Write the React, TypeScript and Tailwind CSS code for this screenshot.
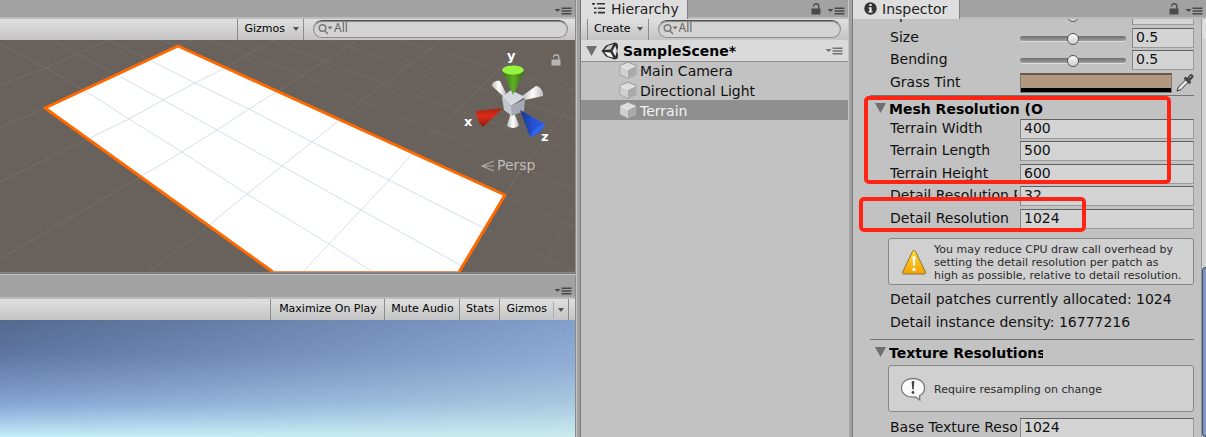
import React from "react";

const font = "font-['DejaVu_Sans','Noto_Sans',sans-serif]";
const toolbar = "flex h-[21px] shrink-0 items-stretch bg-linear-to-b from-[#e0e0e0] to-[#c4c4c4]";
const toolButton = "flex items-center border-l border-[#8c8c8c] text-[11px] text-black";

function MenuIcon({ light = false }: { light?: boolean }) {
  return (
    <svg viewBox="0 0 18 10" className="h-2.5 w-[18px]" fill={light ? "#707070" : "#484848"}>
      <path d="M0.5 3h6L3.5 6z" />
      <path d="M7.5 1.5h10v1.4h-10zM7.5 4.3h10v1.4h-10zM7.5 7.1h10v1.4h-10z" />
    </svg>
  );
}

function LockIcon({ color = "#4a4a4a" }: { color?: string }) {
  return (
    <svg viewBox="0 0 10 12" className="h-3 w-2.5" fill="none">
      <path d="M2.5 3.5V3a2.6 2.2 0 0 1 5.3 0v3" stroke={color} strokeWidth="1.3" />
      <path d="M0.5 5.5h9v6h-9z" fill={color} />
    </svg>
  );
}

function Caret({ className = "" }: { className?: string }) {
  return (
    <svg viewBox="0 0 6 4" className={`h-1 w-1.5 ${className}`}>
      <path d="M0 0h6L3 4z" fill="#555" />
    </svg>
  );
}

function Foldout() {
  return (
    <svg viewBox="0 0 11 10" className="h-2.5 w-[11px] shrink-0">
      <path d="M0 0h11L5.5 10z" fill="#6e6e6e" />
    </svg>
  );
}

function TabBar({ children, lock = false, tall = false }: { children?: React.ReactNode; lock?: boolean; tall?: boolean }) {
  return (
    <div className={`flex shrink-0 items-stretch border-b-2 border-[#bcbcbc] bg-[#a2a2a2] ${tall ? "h-6" : "h-[19px]"}`}>
      {children}
      <div className="ml-auto flex items-end gap-1.5 pr-[3px]">
        {lock && (
          <button aria-label="Lock" className="pb-0.5">
            <LockIcon />
          </button>
        )}
        <button aria-label="Panel menu" className="pb-px">
          <MenuIcon />
        </button>
      </div>
    </div>
  );
}

function Tab({ icon, label }: { icon: React.ReactNode; label: string }) {
  return (
    <button className="-mb-0.5 flex min-w-[107px] items-center gap-[5px] border-r border-[#808080] bg-[#dedede] pr-2 pb-0.5 pl-[11px] text-sm leading-4 text-[#222]">
      {icon}
      {label}
    </button>
  );
}

function Search({ label }: { label: string }) {
  return (
    <label className="my-px flex h-[18px] flex-1 items-center rounded-full border border-[#8e8e8e] border-t-[#4c4c4c] bg-[#d4d4d4] pl-1 shadow-[inset_0_1px_1px_#8a8a8a]">
      <svg viewBox="0 0 16 12" className="h-3 w-4 shrink-0" fill="none" stroke="#7c7c7c" strokeWidth="1.6">
        <circle cx="4.5" cy="5" r="3.3" />
        <path d="M7 8l3 3" />
        <path d="M9.5 3.5h5L12 6.5z" fill="#6e6e6e" stroke="none" />
      </svg>
      <input
        aria-label={label}
        defaultValue="All"
        className="h-4 w-full min-w-0 bg-transparent pb-0.5 font-['Noto_Sans',sans-serif] text-xs text-[#636363] outline-none"
      />
    </label>
  );
}

function Terrain() {
  return (
    <svg viewBox="0 40 575 232" preserveAspectRatio="xMidYMid slice" className="block h-full w-full" fill="none">
      <g stroke="#77736f" strokeWidth="1" opacity="0.75">
        <path d="M109 40L151 61M55 42L121 77M0 44L46 68L84 90" />
        <path d="M0 74L45 108M0 110L28 140L110 210M0 215L72 272M0 168L50 205L155 270" opacity="0.6" />
        <path d="M110 40L78 53L46 68L8 82L0 85M178 46L192 40M45 108L0 128M88 139L0 182M140 177L60 224L0 259M208 226L162 262L148 272" />
        <path d="M160 40L178 46M223 69L248 54L276 40M276 92L317 66L358 40M342 118L362 101L442 40M412 154L435 131L530 40M505 195L521 170L575 100" />
        <path d="M210 40L248 54L308 78L435 131L575 190M270 40L375 80L575 153M330 40L575 120M400 40L575 91M484 228L575 272M505 196L575 227M540 272L575 205" opacity="0.7" />
      </g>
      <path d="M45 108L178 46L505 195L459 272H273Z" fill="#fff" />
      <g stroke="#d5e0ea" strokeWidth="1">
        <path d="M151 61L195 83L249 109L312 142L389 180L484 228M121 77L163 100L217 130L282 166L361 210L462 266M84 90L129 119L182 152L247 194L329 244L373 272" />
        <path d="M223 69L195 83L163 100L129 119L88 139M276 92L249 109L217 130L182 152L140 177M338 121L312 142L282 166L247 194L208 226M412 154L389 180L361 210L329 244L303 272" />
      </g>
      <path d="M273 272L45 108L178 46L505 195L459 272" stroke="#ff6a00" strokeWidth="3" strokeLinejoin="round" />
      <path d="M273 271.5H459" stroke="#e8935a" />
    </svg>
  );
}

function OrientationGizmo() {
  return (
    <svg viewBox="455 45 110 135" className="h-[135px] w-[110px]" fontFamily="DejaVu Sans, sans-serif">
      <defs>
        <linearGradient id="gy"><stop stopColor="#3f7d14" /><stop offset=".5" stopColor="#5fae24" /><stop offset="1" stopColor="#356d10" /></linearGradient>
        <linearGradient id="gr" x2="0" y2="1"><stop stopColor="#a02414" /><stop offset=".4" stopColor="#de2a17" /><stop offset="1" stopColor="#941c10" /></linearGradient>
        <linearGradient id="gb"><stop stopColor="#16388c" /><stop offset=".5" stopColor="#2450d0" /><stop offset="1" stopColor="#2b5ce8" /></linearGradient>
        <linearGradient id="gw"><stop stopColor="#b8b8b8" /><stop offset=".5" stopColor="#fff" /><stop offset="1" stopColor="#bcbcbc" /></linearGradient>
      </defs>
      <path d="M492 86c-1-3 4-6 8-5l6 12-2 4z" fill="url(#gw)" />
      <path d="M524 98l-2-2 14-10c4 0 8 6 7 10l-18 4z" fill="url(#gw)" />
      <path d="M511 113h3l5 12c-2 4-11 4-12 0z" fill="url(#gw)" />
      <path d="M502 97l9-7 14 7-14 9z" fill="#d4d9e0" />
      <path d="M502 97l9 9 14-7-1 12-12 5-7-6z" fill="#a4a9b2" />
      <path d="M502 97l9 9 1 10-8-6z" fill="#c3c7ce" />
      <path d="M503 72l10 23 11-23z" fill="url(#gy)" />
      <ellipse cx="513" cy="70" rx="10.8" ry="4.6" fill="#97f53f" />
      <path d="M503 108l-27 3c0 6 3 12 7 16z" fill="url(#gr)" />
      <path d="M520 110l25 14c-2 6-8 11-15 13z" fill="url(#gb)" />
      <path d="M545 123c-1 6-8 12-15 14 4-8 8-12 15-14z" fill="#2f66ee" />
      <g fill="#fff" fontSize="13" fontWeight="bold">
        <text x="507" y="60">y</text>
        <text x="464" y="126">x</text>
        <text x="541" y="141">z</text>
      </g>
      <path d="M494 161l-12 5 12 5M482 166h12" fill="none" stroke="#b0adaa" strokeWidth="1.1" />
      <text x="497" y="170" fill="#c0bdba" fontSize="14">Persp</text>
    </svg>
  );
}

function UnityLogo() {
  return (
    <svg viewBox="0 0 18 18" className="h-[18px] w-[18px] shrink-0">
      <path d="M0.5 9L5 3.4 13.500 .6l2.800 .6 .8 3L16.200 9l.9 4.800-.8 3-2.800.6L5 14.600z" fill="#2e2e2e" />
      <path d="M3.200 8L7 3.800l5.400-1.500L9.600 7.400z" fill="#cfcfcf" />
      <path d="M3.200 10L7 14.200l5.400 1.500-2.800-5.100z" fill="#f4f4f4" />
      <path d="M14.400 3.600L15.800 9l-1.400 5.400L11.400 9z" fill="#e6e6e6" />
    </svg>
  );
}

function CubeIcon() {
  return (
    <svg viewBox="0 0 18 18" className="h-[18px] w-[18px] shrink-0">
      <path d="M9 1l8 3.5v9L9 17.4 1 13.500v-9z" fill="#dcdcdc" stroke="#989898" strokeWidth="1" strokeLinejoin="round" />
      <path d="M1.500 5L9 8.500V17l-7.500-3.800z" fill="#d0d0d0" />
      <path d="M16.500 5L9 8.500V17l7.500-3.800z" fill="#a9a9a9" />
      <path d="M2 5l7 3.400L16 5" stroke="#ececec" fill="none" />
    </svg>
  );
}

function HierarchyItem({ name, selected = false }: { name: string; selected?: boolean }) {
  return (
    <li>
      <button className={`flex h-5 w-full items-center gap-[3px] pl-[38px] text-sm leading-5 ${selected ? "bg-[#8f8f8f] text-[#f2f2f2]" : "text-[#111]"}`}>
        <CubeIcon />
        <span className="pt-0.5">{name}</span>
      </button>
    </li>
  );
}

const field =
  "h-5 min-w-0 border border-[#9a9a9a] border-t-[#606060] border-l-[#858585] bg-[#d4d4d4] pb-0.5 pl-[3px] text-sm text-[#111] outline-none";
const rowLabel = "mr-[3px] w-[127px] shrink-0 overflow-hidden text-sm leading-[18px] whitespace-nowrap text-[#111]";

function NumberRow({ id, label, value }: { id: string; label: string; value: string }) {
  return (
    <div className="flex pl-5">
      <label htmlFor={id} className={rowLabel}>{label}</label>
      <input id={id} defaultValue={value} className={`${field} flex-1`} />
    </div>
  );
}

function SliderRow({ id, label, value }: { id: string; label: string; value: string }) {
  return (
    <div className="flex w-full pl-5">
      <label htmlFor={id} className={rowLabel}>{label}</label>
      <input
        id={id}
        type="range"
        min="0"
        max="1"
        step="0.01"
        defaultValue={value}
        className="mt-1 mr-1.5 h-3 min-w-0 flex-1 appearance-none bg-transparent [&::-webkit-slider-runnable-track]:h-[5px] [&::-webkit-slider-runnable-track]:rounded-full [&::-webkit-slider-runnable-track]:bg-linear-to-b [&::-webkit-slider-runnable-track]:from-[#6e6e6e] [&::-webkit-slider-runnable-track]:to-[#a0a0a0] [&::-webkit-slider-runnable-track]:shadow-[0_1px_0_#dedede] [&::-webkit-slider-thumb]:-mt-[3px] [&::-webkit-slider-thumb]:size-3 [&::-webkit-slider-thumb]:appearance-none [&::-webkit-slider-thumb]:rounded-full [&::-webkit-slider-thumb]:border [&::-webkit-slider-thumb]:border-[#555] [&::-webkit-slider-thumb]:bg-linear-to-b [&::-webkit-slider-thumb]:from-[#fafafa] [&::-webkit-slider-thumb]:to-[#cfcfcf]"
      />
      <input aria-label={`${label} value`} defaultValue={value} className={`${field} w-[62px]`} />
    </div>
  );
}

function SectionHeader({ title }: { title: string }) {
  return (
    <button className="flex h-6 w-full items-center gap-[3px] border-t border-[#777] pl-[5px] text-left">
      <Foldout />
      <span className="w-[154px] overflow-hidden pt-0.5 text-sm leading-[18px] font-bold whitespace-nowrap text-black">{title}</span>
    </button>
  );
}

function HelpBox({ icon, children }: { icon: React.ReactNode; children: React.ReactNode }) {
  return (
    <div className="ml-[18px] flex h-[47px] items-center gap-[7px] rounded-[3px] border border-[#888] bg-[#d0d0d0] pl-3">
      {icon}
      <p className="pt-0.5 text-[11px] leading-[13px] whitespace-nowrap text-[#2a2a2a]">{children}</p>
    </div>
  );
}

export default function App() {
  return (
    <div className={`flex h-screen overflow-hidden bg-[#a2a2a2] ${font}`}>
      <main className="flex min-w-0 flex-1 flex-col">
        <section className="flex shrink-0 flex-col border-r border-[#8a8a8a]">
          <TabBar />
          <div className={toolbar}>
            <button className={`${toolButton} ml-auto gap-2 pr-1 pl-1.5`}>
              Gizmos <Caret className="mb-0.5" />
            </button>
            <div className="flex w-[272px] border-l border-[#8c8c8c] pr-[7px] pl-[9px]">
              <Search label="Search scene" />
            </div>
          </div>
          <div className="relative h-[232px] bg-[#68615c]">
            <Terrain />
            <div className="absolute top-[5px] right-2.5">
              <OrientationGizmo />
            </div>
            <button aria-label="Lock rotation" className="absolute top-3.5 right-3.5">
              <LockIcon color="#b8b6b4" />
            </button>
          </div>
        </section>
        <div className="h-[3px] shrink-0 border-t border-b border-t-[#858585] border-b-[#c4c4c4] bg-[#777]" />
        <section className="flex min-h-0 flex-1 flex-col border-r border-[#8a8a8a]">
          <TabBar tall />
          <div className={toolbar}>
            <button className={`${toolButton} ml-auto w-[114px] justify-center`}>Maximize On Play</button>
            <button className={`${toolButton} w-[75px] justify-center`}>Mute Audio</button>
            <button className={`${toolButton} w-10 justify-center`}>Stats</button>
            <button className={`${toolButton} border-r pl-1.5`}>
              Gizmos
              <span className="ml-1.5 flex h-4 items-center border-l border-[#aaa] px-1">
                <Caret />
              </span>
            </button>
            <span className="w-1.5" />
          </div>
          <div className="flex flex-1 bg-[linear-gradient(#82a0cb,#92afd6_38%,#a8c8e0_70%,#bfe0ea_90%,#cbeced)]">
            <div className="flex-1 bg-[linear-gradient(#54698f,#5d74a0_28%,#7590bd_55%,#86a6d4_72%,#a5c8e8_86%,#c5eef8)] [mask-image:linear-gradient(to_right,black,transparent)]" />
          </div>
        </section>
      </main>

      <div className="w-[5px] shrink-0 border-x border-l-[#c4c4c4] border-r-[#777]" />

      <section className="flex w-[267px] shrink-0 flex-col bg-[#c2c2c2]">
        <TabBar lock>
          <Tab
            label="Hierarchy"
            icon={
              <svg viewBox="0 0 14 11" className="h-[11px] w-3.5" fill="#333">
                <path d="M0 0h3v1.6H0zM5 0h8v1.6H5zM2 4.5h2.5v1.6H2zM6 4.5h7v1.6H6zM2 8.8h2.5v1.6H2zM6 8.8h7v1.6H6zM1 1h1v1H1z" />
              </svg>
            }
          />
        </TabBar>
        <div className={`${toolbar} pl-1.5`}>
          <button className={`${toolButton} gap-1.5 border-r pr-[5px] pl-1.5`}>
            Create <Caret className="mb-0.5" />
          </button>
          <div className="flex flex-1 pr-[7px] pl-[9px]">
            <Search label="Search hierarchy" />
          </div>
        </div>
        <div className="flex h-[22px] shrink-0 items-center border-b border-[#8f8f8f] bg-[#dadada] pr-[5px] pl-[5px]">
          <Foldout />
          <span className="ml-1 flex items-center gap-1 text-sm font-bold text-black">
            <UnityLogo />
            SampleScene*
          </span>
          <button aria-label="Scene menu" className="ml-auto">
            <MenuIcon light />
          </button>
        </div>
        <ul className="-mt-0.5">
          <HierarchyItem name="Main Camera" />
          <HierarchyItem name="Directional Light" />
          <HierarchyItem name="Terrain" selected />
        </ul>
      </section>

      <div className="w-[5px] shrink-0 border-x border-l-[#c4c4c4] border-r-[#777]" />

      <section className="flex w-[353px] shrink-0 flex-col bg-[#c2c2c2]">
        <TabBar lock>
          <Tab
            label="Inspector"
            icon={
              <svg viewBox="0 0 13 13" className="size-[13px]">
                <circle cx="6.5" cy="6.5" r="6.2" fill="#333" />
                <path d="M5.4 2h2.2v2H5.4zM4.6 5.2h3v4h1v1.3H4.4V9.2h1V6.5h-.8z" fill="#eee" />
              </svg>
            }
          />
        </TabBar>
        <div className="relative flex min-h-0 flex-1">
          <div className="min-w-0 flex-1 pr-[7px] pl-[17px]">
            <div className="flex h-1.5 items-end overflow-hidden">
              <SliderRow id="speed" label="Speed" value="0.5" />
            </div>
            <div className="mt-[3px] flex flex-col gap-0.5">
              <SliderRow id="size" label="Size" value="0.5" />
              <SliderRow id="bending" label="Bending" value="0.5" />
            </div>
            <div className="mt-[3px] mb-0.5 flex pl-5">
              <span className={rowLabel}>Grass Tint</span>
              <button aria-label="Grass Tint" className="h-5 min-w-0 flex-1 border border-[#7a7a7a] border-t-2 border-t-[#66594c] bg-[#b1987e]">
                <span className="mt-[13px] block h-1 bg-black" />
              </button>
              <button aria-label="Pick color" className="ml-1 w-[18px]">
                <svg viewBox="0 0 18 20" className="h-5 w-[18px]">
                  <path d="M1 18l1.500-4L10 6.500l2.500 2.500L5 16.500z" fill="#e8e8e8" stroke="#333" />
                  <path d="M8 5.500l1.500-1.200 1.800 1L14 2c1.500-1.400 4 .6 2.800 2.400L14 7.600l.6 2-1.200 1.200z" fill="#4c4c4c" stroke="#333" strokeWidth=".8" />
                  <path d="M13.500 4.500l1.600-1.600" stroke="#ccc" />
                </svg>
              </button>
            </div>
            <SectionHeader title="Mesh Resolution (O" />
            <div className="flex flex-col gap-[3px]">
              <div className="flex flex-col gap-0.5">
                <NumberRow id="width" label="Terrain Width" value="400" />
                <NumberRow id="length" label="Terrain Length" value="500" />
              </div>
              <div className="flex flex-col gap-0.5">
                <NumberRow id="height" label="Terrain Height" value="600" />
                <NumberRow id="per-patch" label="Detail Resolution Per Patch" value="32" />
              </div>
              <NumberRow id="detail" label="Detail Resolution" value="1024" />
            </div>
            <div className="mt-[9px]">
              <HelpBox
                icon={
                  <svg viewBox="0 0 26 26" className="size-[26px] shrink-0">
                    <defs>
                      <linearGradient id="warn" x2="0" y2="1"><stop stopColor="#ffd83a" /><stop offset="1" stopColor="#f5a300" /></linearGradient>
                    </defs>
                    <path d="M13 1.500c1 0 1.400.8 2 2L24.500 23c.4 1.300-.2 2-1.300 2H2.800c-1.200 0-1.700-.8-1.200-2L11 3.500c.5-1.200 1-2 2-2z" fill="url(#warn)" stroke="#857445" />
                    <path d="M11.600 8.500c0-2 2.800-2 2.800 0l-.6 8.500h-1.600z" fill="#fff" />
                    <circle cx="13" cy="20.500" r="1.700" fill="#fff" />
                  </svg>
                }
              >
                You may reduce CPU draw call overhead by
                <br />
                setting the detail resolution per patch as
                <br />
                high as possible, relative to detail resolution.
              </HelpBox>
            </div>
            <div className="mt-[3px] mb-[5px] pl-5 text-sm leading-[23px] whitespace-nowrap text-[#111]">
              <p>Detail patches currently allocated: 1024</p>
              <p>Detail instance density: 16777216</p>
            </div>
            <SectionHeader title="Texture Resolutions" />
            <div className="mt-0.5 mb-1.5">
              <HelpBox
                icon={
                  <svg viewBox="0 0 26 26" className="size-[26px] shrink-0">
                    <path d="M12 2.500c6.500 0 11.500 3.800 11.500 9.500 0 3.500-2 6.300-5 7.800l.3 4.200-4.300-3c-8 1.200-14-3-14-9 0-5.700 5-9.500 11.500-9.500z" fill="#fafafa" stroke="#777" strokeWidth="1.300" />
                    <path d="M10.700 6c0-1.300 2.600-1.300 2.600 0l-.6 7.500h-1.400z" fill="#444" />
                    <circle cx="12" cy="16.500" r="1.400" fill="#444" />
                  </svg>
                }
              >
                Require resampling on change
              </HelpBox>
            </div>
            <NumberRow id="base" label="Base Texture Resolution" value="1024" />
          </div>
          <div className="flex w-[5px] shrink-0 flex-col border-l border-[#999] bg-[#d2d2d2]">
            <div className="h-5 rounded-bl-full bg-[#dedede]" />
            <div className="mt-[228px] flex-1 rounded-l-full border border-r-0 border-[#3f4f6e] bg-[#8297bd]" />
          </div>
          <div className="pointer-events-none absolute top-[77px] left-[11px] h-[88px] w-[307px] rounded-[5px] border-4 border-[#ff2313]" />
          <div className="pointer-events-none absolute top-[178px] left-1.5 h-[35px] w-[227px] rounded-[5px] border-4 border-[#ff2313]" />
        </div>
      </section>
    </div>
  );
}
